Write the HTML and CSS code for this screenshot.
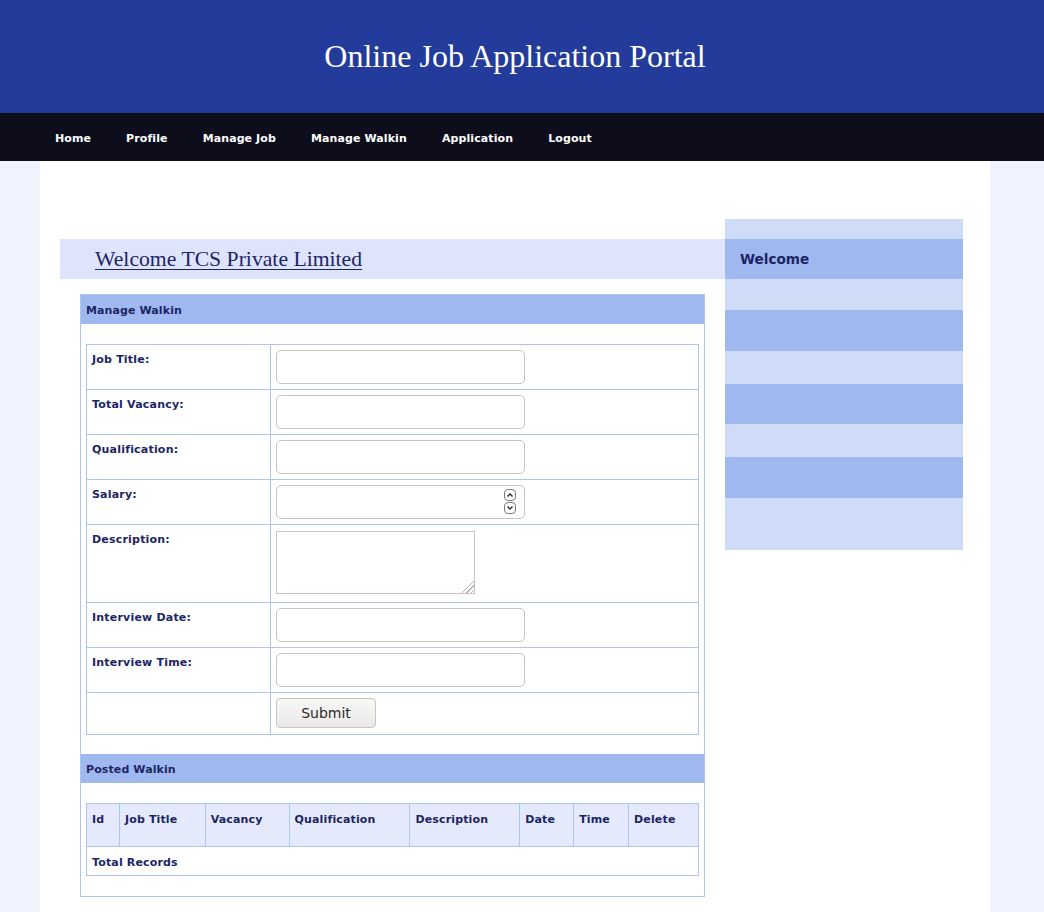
FILE: index.html
```html
<!DOCTYPE html>
<html>
<head>
<meta charset="utf-8">
<title>Manage Walkin</title>
<link rel="stylesheet" href="styles.css">
</head>
<body>
<header class="top">
  <h1 class="site-title">Online Job Application Portal</h1>
</header>
<nav class="menu">
  <a href="#">Home</a>
  <a href="#">Profile</a>
  <a href="#">Manage Job</a>
  <a href="#">Manage Walkin</a>
  <a href="#">Application</a>
  <a href="#">Logout</a>
</nav>
<div class="page">
  <div class="wrap">
    <main class="content">
      <div class="welcome-bar"><a href="#">Welcome TCS Private Limited</a></div>
      <section class="panel">
        <div class="panel-head">Manage Walkin</div>
        <div class="panel-body first">
          <table class="form-table">
            <tr class="r45"><th>Job Title:</th><td><input class="field" type="text"></td></tr>
            <tr class="r45"><th>Total Vacancy:</th><td><input class="field" type="text"></td></tr>
            <tr class="r45"><th>Qualification:</th><td><input class="field" type="text"></td></tr>
            <tr class="r45"><th>Salary:</th><td>
              <div class="num-wrap">
                <input class="field" type="text">
                <span class="spin">
                  <span class="sb"><svg width="8" height="6" viewBox="0 0 8 6"><path d="M1.5 4.5 L4 2 L6.5 4.5" fill="none" stroke="#222" stroke-width="1.3"/></svg></span>
                  <span class="sb"><svg width="8" height="6" viewBox="0 0 8 6"><path d="M1.5 1.5 L4 4 L6.5 1.5" fill="none" stroke="#222" stroke-width="1.3"/></svg></span>
                </span>
              </div>
            </td></tr>
            <tr class="r78"><th>Description:</th><td><div class="area-wrap"><textarea class="area"></textarea></div></td></tr>
            <tr class="r45"><th>Interview Date:</th><td><input class="field" type="text"></td></tr>
            <tr class="r45"><th>Interview Time:</th><td><input class="field" type="text"></td></tr>
            <tr class="r42"><th></th><td><button class="btn" type="button">Submit</button></td></tr>
          </table>
        </div>
        <div class="panel-head">Posted Walkin</div>
        <div class="panel-body">
          <table class="list-table">
            <tr class="hrow">
              <th class="c-id">Id</th>
              <th class="c-title">Job Title</th>
              <th class="c-vac">Vacancy</th>
              <th class="c-qual">Qualification</th>
              <th class="c-desc">Description</th>
              <th class="c-date">Date</th>
              <th class="c-time">Time</th>
              <th class="c-del">Delete</th>
            </tr>
            <tr class="frow"><td colspan="8">Total Records</td></tr>
          </table>
        </div>
      </section>
    </main>
    <aside class="side">
      <div class="s s1"></div>
      <div class="s s2 label">Welcome</div>
      <div class="s s3"></div>
      <div class="s s4"></div>
      <div class="s s5"></div>
      <div class="s s6"></div>
      <div class="s s7"></div>
      <div class="s s8"></div>
      <div class="s s9"></div>
    </aside>
  </div>
</div>
</body>
</html>
```

FILE: styles.css
```css
* { box-sizing: border-box; }
html, body { margin: 0; padding: 0; }
body {
  background: #f0f3fd;
  font-family: "DejaVu Sans", Verdana, sans-serif;
  color: #1c2564;
}
.top {
  background: #233c9c;
  height: 113px;
  display: flex;
  align-items: center;
  justify-content: center;
}
.site-title {
  margin: 0 14px 0 0;
  font-family: "Liberation Serif", "Times New Roman", serif;
  font-weight: normal;
  font-size: 32px;
  color: #ffffff;
}
.menu {
  background: #0d0d1c;
  height: 48px;
  display: flex;
  align-items: center;
  padding: 2px 0 0 55px;
  gap: 35px;
}
.menu a {
  color: #ffffff;
  text-decoration: none;
  font-weight: bold;
  font-size: 11px;
  letter-spacing: 0.1px;
}
.page {
  padding: 0 54px 0 40px;
}
.wrap {
  background: #ffffff;
  display: flex;
  align-items: flex-start;
  padding: 58px 27px 15px 20px;
  min-height: 751px;
}
.content {
  width: 665px;
  padding-top: 20px;
}
.welcome-bar {
  background: #dfe4fd;
  height: 40px;
  display: flex;
  align-items: center;
  padding-left: 35px;
}
.welcome-bar a {
  font-family: "Liberation Serif", "Times New Roman", serif;
  font-size: 21.7px;
  color: #1c2564;
  text-decoration: underline;
  text-decoration-thickness: 1px;
  text-underline-offset: 3px;
}
.panel {
  margin: 15px 0 0 20px;
  width: 625px;
  border: 1px solid #b0c4f0;
}
.panel-head {
  background: #a0b8f0;
  height: 29px;
  display: flex;
  align-items: center;
  padding: 1px 0 0 5px;
  font-size: 11px;
  font-weight: bold;
  letter-spacing: 0.1px;
  color: #1c2564;
}
.panel-body {
  padding: 20px 5px;
}
.panel-body.first {
  padding-bottom: 19px;
}
table {
  border-collapse: collapse;
  width: 613px;
}
.form-table th, .form-table td {
  border: 1px solid #b0c4f0;
  vertical-align: top;
}
.form-table th {
  width: 184px;
  text-align: left;
  font-size: 11px;
  font-weight: bold;
  letter-spacing: 0.2px;
  padding: 8px 5px 0 5px;
  color: #1c2564;
}
.form-table td {
  padding: 5px 5px 0 5px;
}
.r45 { height: 45px; }
.r78 { height: 78px; }
.r42 { height: 42px; }
.field {
  display: block;
  width: 249px;
  height: 34px;
  border: 1px solid #c8c4be;
  border-radius: 5px;
  background: #ffffff;
  margin: 0;
  padding: 0 6px;
  font-size: 13px;
}
.num-wrap {
  position: relative;
  width: 249px;
}
.spin {
  position: absolute;
  right: 9px;
  top: 4px;
  display: flex;
  flex-direction: column;
  gap: 1px;
}
.sb {
  width: 12px;
  height: 12px;
  border: 1px solid #7a7a7a;
  border-radius: 4px;
  display: flex;
  align-items: center;
  justify-content: center;
  background: #fff;
}
.area-wrap {
  position: relative;
  width: 199px;
  height: 63px;
  margin-top: 1px;
}
.area {
  display: block;
  width: 199px;
  height: 63px;
  margin: 0;
  border: 1px solid #c8c4be;
  border-radius: 0;
  resize: none;
}
.area-wrap::after {
  content: "";
  position: absolute;
  right: 1px;
  bottom: 1px;
  width: 14px;
  height: 14px;
  background: repeating-linear-gradient(135deg, transparent 0 2px, #b5b2ad 2px 3px);
  clip-path: polygon(100% 0, 100% 100%, 0 100%);
}
.btn {
  display: block;
  width: 100px;
  height: 30px;
  margin: 0;
  border: 1px solid #c8c4be;
  border-radius: 4px;
  background: linear-gradient(#f8f8f7, #e9e8e6);
  font-family: "DejaVu Sans", sans-serif;
  font-size: 14px;
  color: #2b2b2b;
}
.list-table th, .list-table td {
  border: 1px solid #b0c4f0;
  text-align: left;
  vertical-align: top;
  font-size: 11px;
  font-weight: bold;
  letter-spacing: 0.15px;
  color: #1c2564;
}
.hrow { height: 43px; background: #e4eafb; }
.hrow th { padding: 9px 5px 0 5px; }
.frow { height: 29px; }
.frow td { padding: 9px 5px 0 5px; }
.c-id { width: 33px; }
.c-title { width: 86px; }
.c-vac { width: 84px; }
.c-qual { width: 121px; }
.c-desc { width: 110px; }
.c-date { width: 54px; }
.c-time { width: 55px; }
.c-del { width: 70px; }
.side {
  width: 238px;
}
.s { background: #cfdcf7; }
.s1 { height: 20px; }
.s2 { height: 40px; background: #a0b8f0; }
.s3 { height: 31px; }
.s4 { height: 41px; background: #a0b8f0; }
.s5 { height: 33px; }
.s6 { height: 40px; background: #a0b8f0; }
.s7 { height: 33px; }
.s8 { height: 41px; background: #a0b8f0; }
.s9 { height: 52px; }
.label {
  display: flex;
  align-items: center;
  padding-left: 15px;
  font-size: 13.6px;
  font-weight: bold;
  color: #1c2564;
}
```
